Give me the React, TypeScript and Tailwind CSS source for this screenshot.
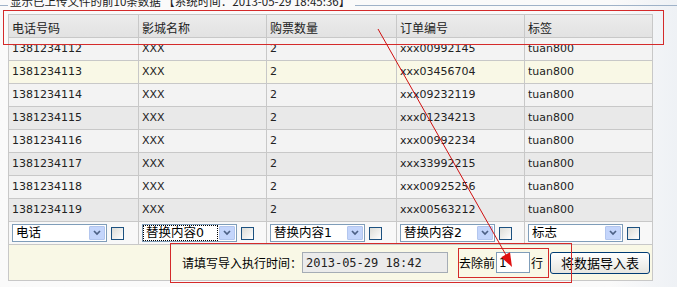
import React from "react";

const rows = [
  ["1381234112", "XXX", "2", "xxx00992145", "tuan800"],
  ["1381234113", "XXX", "2", "xxx03456704", "tuan800"],
  ["1381234114", "XXX", "2", "xxx09232119", "tuan800"],
  ["1381234115", "XXX", "2", "xxx01234213", "tuan800"],
  ["1381234116", "XXX", "2", "xxx00992234", "tuan800"],
  ["1381234117", "XXX", "2", "xxx33992215", "tuan800"],
  ["1381234118", "XXX", "2", "xxx00925256", "tuan800"],
  ["1381234119", "XXX", "2", "xxx00563212", "tuan800"],
];

const rowBgs = [
  "bg-[#f3f3f3]",
  "bg-[#f9f8e6]",
  "bg-[#f3f3f3]",
  "bg-[#e9e9e9]",
  "bg-[#f3f3f3]",
  "bg-[#e9e9e9]",
  "bg-[#f3f3f3]",
  "bg-[#e9e9e9]",
];

const widths = ["w-[130px]", "w-[128px]", "w-[130px]", "w-[128px]", "w-[128px]"];
const headers = ["电话号码", "影城名称", "购票数量", "订单编号", "标签"];
const selects = ["电话", "替换内容0", "替换内容1", "替换内容2", "标志"];

const cjk = { fontFamily: '"Noto Sans CJK SC", "DejaVu Sans", sans-serif' };
const num = { fontFamily: '"DejaVu Sans", "Noto Sans CJK SC", sans-serif' };

function Sel({ label, focus }: { label: string; focus?: boolean }) {
  return (
    <div className="flex items-center ml-[3px] gap-[4px]">
      <div className="flex items-center w-[95px] h-[18px] border border-[#7f9db9] bg-white">
        <div
          className={
            focus
              ? "flex-1 h-full flex items-center pl-[2px] text-[12.5px] leading-none border border-dotted border-black"
              : "flex-1 h-full flex items-center pl-[3px] text-[12.5px] leading-none"
          }
          style={num}
        >
          {label}
        </div>
        <div className="w-[16px] h-[14px] mr-[1px] ml-[1px] rounded-[1px] bg-[#c4d5fb] border border-[#b3c6ee] flex items-center justify-center">
          <svg width="8" height="6" viewBox="0 0 8 6">
            <path d="M1 1 L4 4 L7 1" stroke="#4d6185" strokeWidth="1.7" fill="none" />
          </svg>
        </div>
      </div>
      <div className="w-[13px] h-[13px] border border-[#1c5180] bg-linear-to-br from-[#dcdcd7] to-white" />
    </div>
  );
}

export default function App() {
  return (
    <div className="relative w-[677px] h-[287px] overflow-hidden bg-linear-to-r from-[#fafafa] via-[#fafafa] via-90% to-[#eef1f5] text-black">
      {/* legend */}
      <div className="flex h-[14px]">
        <div className="w-[8px] mt-[5px] h-0 border-t border-[#9fb2c8]" />
        <div
          className="-mt-[5px] pl-[2px] pr-[5px] text-[11.5px] leading-[12px] whitespace-nowrap h-[12px] text-[#222]"
          style={cjk}
        >
          显示已上传文件的前10条数据 【系统时间：2013-05-29 18:45:36】
        </div>
        <div className="flex-1 mt-[5px] h-0 border-t border-[#9fb2c8]" />
      </div>

      {/* table */}
      <div className="ml-[8px] w-[645px] border-l border-t border-[#c8c8c8]">
        <div className="flex h-[23px] border-b border-[#c8c8c8] bg-linear-to-b from-[#ececec] to-[#e2e2e2]">
          {headers.map((h, i) => (
            <div
              key={i}
              className={widths[i] + " h-full border-r border-[#c8c8c8] flex items-center pl-[3px] pt-[3px] text-[12px] text-[#222]"}
              style={cjk}
            >
              {h}
            </div>
          ))}
        </div>
        {rows.map((r, ri) => (
          <div key={ri} className={"flex h-[23px] border-b border-[#c8c8c8] " + rowBgs[ri]}>
            {r.map((c, ci) => (
              <div
                key={ci}
                className={widths[ci] + " h-full border-r border-[#c8c8c8] flex items-center pl-[3px] text-[11px] text-[#222]"}
                style={num}
              >
                {c}
              </div>
            ))}
          </div>
        ))}
        <div className="flex h-[23px] border-b border-[#c8c8c8] bg-[#f8f8f8]">
          {selects.map((s, i) => (
            <div key={i} className={widths[i] + " h-full border-r border-[#c8c8c8] flex items-center"}>
              <Sel label={s} focus={i === 1} />
            </div>
          ))}
        </div>
        <div
          className="flex items-center h-[36px] border-b border-r border-[#c8c8c8] bg-[#f9f8e6] text-[12px]"
          style={cjk}
        >
          <span className="ml-[173px] whitespace-nowrap">请填写导入执行时间：</span>
          <div
            className="ml-[0px] w-[146px] h-[21px] border border-[#a5acb5] bg-[#ebebeb] flex items-center pl-[3px] text-[12px] text-[#222]"
            style={{ fontFamily: '"DejaVu Sans Mono", "Liberation Mono", monospace' }}
          >
            2013-05-29 18:42
          </div>
          <span className="ml-[11px] whitespace-nowrap">去除前</span>
          <div
            className="ml-[1px] w-[34px] h-[21px] border border-[#7f9db9] bg-white flex items-center pl-[2px] text-[12px]"
            style={num}
          >
            1
          </div>
          <span className="ml-[1px]">行</span>
          <div className="ml-[7px] w-[100px] h-[22px] rounded-[3px] border border-[#003c74] bg-linear-to-b from-white to-[#e6e6e0] flex items-center justify-center text-[13px]">
            将数据导入表
          </div>
        </div>
      </div>

      {/* annotations */}
      <div className="absolute left-[3px] top-[10px] w-[661px] h-[35px] border border-[#d42a2a]" />
      <div className="absolute left-[170px] top-[243px] w-[402px] h-[40px] border border-[#d42a2a]" />
      <div className="absolute left-[458px] top-[248px] w-[91px] h-[30px] border border-[#d42a2a]" />
      <svg className="absolute left-0 top-0 pointer-events-none" width="677" height="287">
        <line x1="378" y1="29" x2="506" y2="255" stroke="#d01010" strokeWidth="1" />
        <polygon points="512,267 501.2,257.2 510,252.2" fill="#e01010" />
      </svg>
    </div>
  );
}
